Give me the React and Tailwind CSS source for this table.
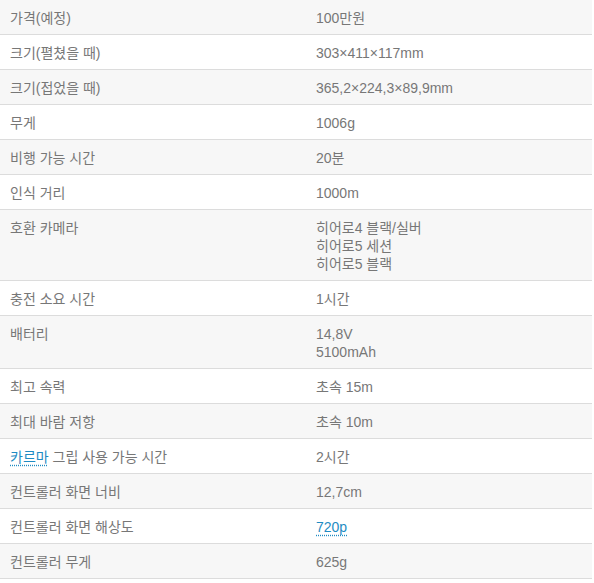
import React from 'react';

const rows = [
  { k: '가격(예정)', v: ['100만원'] },
  { k: '크기(펼쳤을 때)', v: ['303×411×117mm'] },
  { k: '크기(접었을 때)', v: ['365,2×224,3×89,9mm'] },
  { k: '무게', v: ['1006g'] },
  { k: '비행 가능 시간', v: ['20분'] },
  { k: '인식 거리', v: ['1000m'] },
  { k: '호환 카메라', v: ['히어로4 블랙/실버', '히어로5 세션', '히어로5 블랙'] },
  { k: '충전 소요 시간', v: ['1시간'] },
  { k: '배터리', v: ['14,8V', '5100mAh'] },
  { k: '최고 속력', v: ['초속 15m'] },
  { k: '최대 바람 저항', v: ['초속 10m'] },
  { k: <><Link>카르마</Link> 그립 사용 가능 시간</>, v: ['2시간'] },
  { k: '컨트롤러 화면 너비', v: ['12,7cm'] },
  { k: '컨트롤러 화면 해상도', v: [<Link key="l">720p</Link>] },
  { k: '컨트롤러 무게', v: ['625g'] },
  { k: <Link>카르마</Link>, v: [''] },
];

function Link({ children }) {
  return (
    <span className="text-[#1e8bc3] underline decoration-dotted decoration-[#1e8bc3] underline-offset-[3px]">
      {children}
    </span>
  );
}

export default function App() {
  return (
    <div
      className="w-[594px] h-[583px] overflow-hidden bg-white text-[14px] leading-[18px] text-[#777]"
      style={{ fontFamily: '"Liberation Sans", "Noto Sans CJK KR", sans-serif' }}
    >
      <div className="w-[592px]">
        {rows.map((r, i) => (
          <div
            key={i}
            className={`grid grid-cols-[306px_1fr] border-b border-[#dcdcdc] ${i % 2 === 0 ? 'bg-[#f7f7f7]' : 'bg-white'}`}
          >
            <div className="pl-[10px] pt-[9px] pb-[7px]">{r.k}</div>
            <div className="pl-[10px] pt-[9px] pb-[7px]">
              {r.v.map((line, j) => (
                <div key={j} className="min-h-[18px]">{line}</div>
              ))}
            </div>
          </div>
        ))}
      </div>
    </div>
  );
}
